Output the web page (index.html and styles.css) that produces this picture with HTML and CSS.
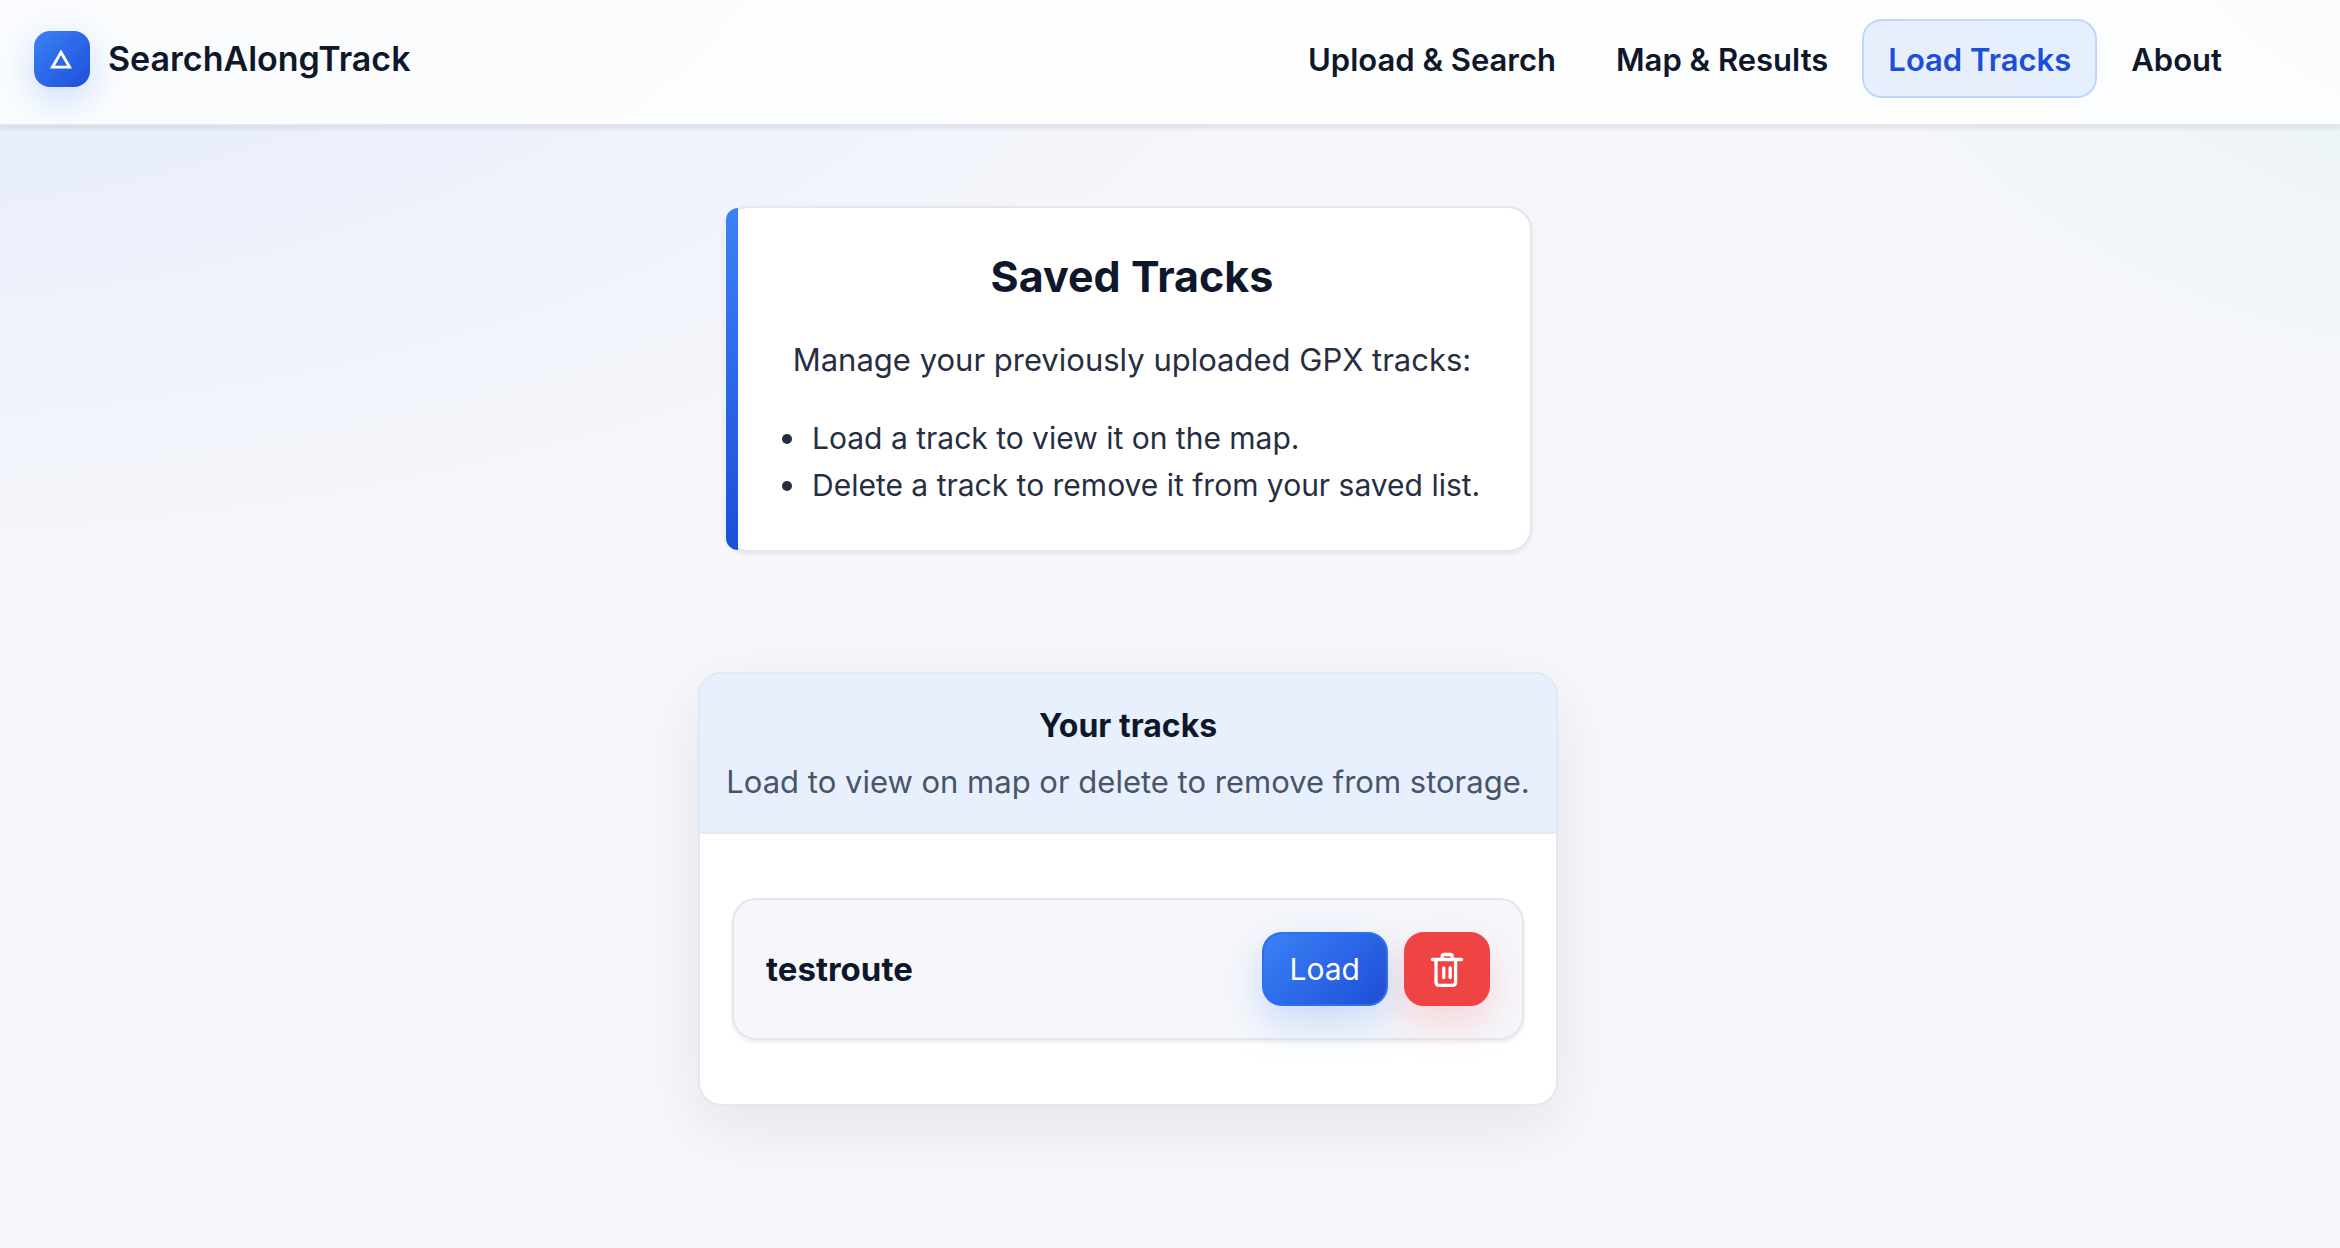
FILE: index.html
```html
<!DOCTYPE html>
<html lang="en">
<head>
  <meta charset="utf-8">
  <meta name="viewport" content="width=device-width, initial-scale=1">
  <title>SearchAlongTrack</title>
  <link rel="stylesheet" href="styles.css">
</head>
<body>
  <header class="site-header">
    <a class="brand" href="#">
      <span class="brand-mark">
        <svg width="24" height="22" viewBox="0 0 24 22" aria-hidden="true"><path d="M11 4.2 19.6 19.2H2.4Z" fill="none" stroke="#fff" stroke-width="2.8"/></svg>
      </span>
      <span class="brand-name">SearchAlongTrack</span>
    </a>
    <nav class="site-nav">
      <a class="nav-link" href="#upload">Upload &amp; Search</a>
      <a class="nav-link" href="#map">Map &amp; Results</a>
      <a class="nav-link active" href="#tracks" aria-current="page">Load Tracks</a>
      <a class="nav-link" href="#about">About</a>
    </nav>
  </header>
  <main class="page">
    <section class="intro">
      <h1 class="intro-title">Saved Tracks</h1>
      <p class="intro-text">Manage your previously uploaded GPX tracks:</p>
      <ul class="intro-list">
        <li>Load a track to view it on the map.</li>
        <li>Delete a track to remove it from your saved list.</li>
      </ul>
    </section>
    <section class="tracks">
      <div class="tracks-head">
        <h2 class="tracks-title">Your tracks</h2>
        <p class="tracks-hint">Load to view on map or delete to remove from storage.</p>
      </div>
      <ul class="track-list">
        <li class="track">
          <span class="track-name">testroute</span>
          <button class="btn btn-load" type="button">Load</button>
          <button class="btn btn-delete" type="button" aria-label="Delete testroute">
            <svg width="34" height="36" viewBox="0 0 34 36" fill="none" stroke="#fff" stroke-width="3.3" stroke-linecap="round" stroke-linejoin="round" aria-hidden="true">
              <path d="M2.5 8.5H31.5M12.2 8V5.5Q12.2 3.5 14.2 3.5H20.2Q22.2 3.5 22.2 5.5V8M6 8.5V31Q6 34.3 9 34.3H22.4Q25.6 34.3 25.6 31V8.5M13.8 17V26.5M20.2 17V26.5"/>
            </svg>
          </button>
        </li>
      </ul>
    </section>
  </main>
</body>
</html>
```
FILE: styles.css
```css
* {
  box-sizing: border-box;
}

body {
  margin: 0;
  min-height: 100vh;
  color: #0f172a;
  font-family: Inter, "Liberation Sans", sans-serif;
  font-size: 31px;
  line-height: 48px;
  background:
    radial-gradient(1640px 720px at -234px -124px, rgba(59, 130, 246, 0.12), transparent),
    radial-gradient(840px 560px at 110% -124px, rgba(16, 185, 129, 0.08), transparent),
    #f6f7fb;
  background-repeat: no-repeat;
}

h1,
h2,
p,
ul {
  margin: 0;
}

.site-header {
  display: flex;
  align-items: center;
  justify-content: space-between;
  padding: 19px 92px 26px 34px;
  border-bottom: 2px solid #e3e5ee;
  background: rgba(255, 255, 255, 0.8);
  box-shadow: 0 2px 4px rgba(15, 23, 42, 0.1);
}

.brand {
  display: flex;
  align-items: center;
  gap: 18px;
  color: inherit;
  text-decoration: none;
}

.brand-mark {
  display: grid;
  place-items: center;
  width: 56px;
  height: 56px;
  border-radius: 16px;
  background: linear-gradient(135deg, #3b82f6, #1d4ed8);
  box-shadow: 0 12px 36px rgba(59, 130, 246, 0.25);
}

.brand-name {
  font-size: 34px;
  font-weight: 600;
}

.site-nav {
  display: flex;
  gap: 8px;
}

.nav-link {
  padding: 15px 24px 13px;
  border: 2px solid transparent;
  border-radius: 20px;
  color: inherit;
  font-weight: 600;
  line-height: 47px;
  text-decoration: none;
}

.nav-link.active {
  border-color: #bfd7fe;
  background: rgba(59, 130, 246, 0.11);
  color: #1d4ed8;
}

.page {
  display: flex;
  flex-direction: column;
  align-items: center;
  gap: 120px;
  padding: 80px 84px 80px 0;
}

.intro {
  position: relative;
  width: 100%;
  max-width: 808px;
  padding: 44px 48px 41px 56px;
  border: 2px solid #e5e7ef;
  border-left-color: #eef1f8;
  border-radius: 24px;
  background: #fff;
  box-shadow: 0 2px 4px rgba(15, 23, 42, 0.08);
}

.intro::before {
  content: "";
  position: absolute;
  inset: 0 auto 0 0;
  width: 12px;
  border-radius: 12px 0 0 12px;
  background: linear-gradient(#3b82f6, #1d4ed8);
}

.intro-title {
  font-size: 43px;
  font-weight: 700;
  text-align: center;
}

.intro-text {
  margin: 36px 0 31px;
  color: #272e42;
  text-align: center;
}

.intro-list {
  padding: 0;
  color: #272e42;
  font-size: 30px;
  line-height: 47px;
  list-style: none;
}

.intro-list li {
  display: flex;
  align-items: center;
  gap: 20px;
}

.intro-list li::before {
  content: "";
  flex: none;
  width: 10px;
  height: 10px;
  border-radius: 50%;
  background: currentColor;
}

.tracks {
  width: 100%;
  max-width: 860px;
  border: 2px solid #e5e7ef;
  border-radius: 24px;
  background: #fff;
  box-shadow: 0 20px 60px rgba(15, 23, 42, 0.08);
}

.tracks-head {
  padding: 28px 0 26px;
  border-bottom: 2px solid #e5e7ef;
  border-radius: 22px 22px 0 0;
  background: #e9f0fd;
  text-align: center;
}

.tracks-title {
  font-size: 32px;
  font-weight: 700;
}

.tracks-hint {
  margin-top: 8px;
  color: #475569;
}

.track-list {
  padding: 64px 32px;
  list-style: none;
}

.track {
  display: flex;
  align-items: center;
  gap: 16px;
  padding: 32px;
  border: 2px solid #e5e7ef;
  border-radius: 24px;
  background: #f6f7fb;
  box-shadow: 0 2px 4px rgba(15, 23, 42, 0.08);
}

.track-name {
  flex: 1;
  font-size: 33px;
  font-weight: 700;
}

.btn {
  display: grid;
  place-items: center;
  height: 74px;
  padding: 0 26px;
  border: 2px solid #2f6fee;
  border-radius: 20px;
  color: #fff;
  font: inherit;
  font-size: 30px;
}

.btn-load {
  background: linear-gradient(135deg, #3b82f6, #1d4ed8);
  box-shadow: 0 16px 40px rgba(59, 130, 246, 0.25);
}

.btn-delete {
  padding: 0 24px;
  border-color: #ef4444;
  background: #ef4444;
  box-shadow: 0 16px 40px rgba(239, 68, 68, 0.2);
}
```
